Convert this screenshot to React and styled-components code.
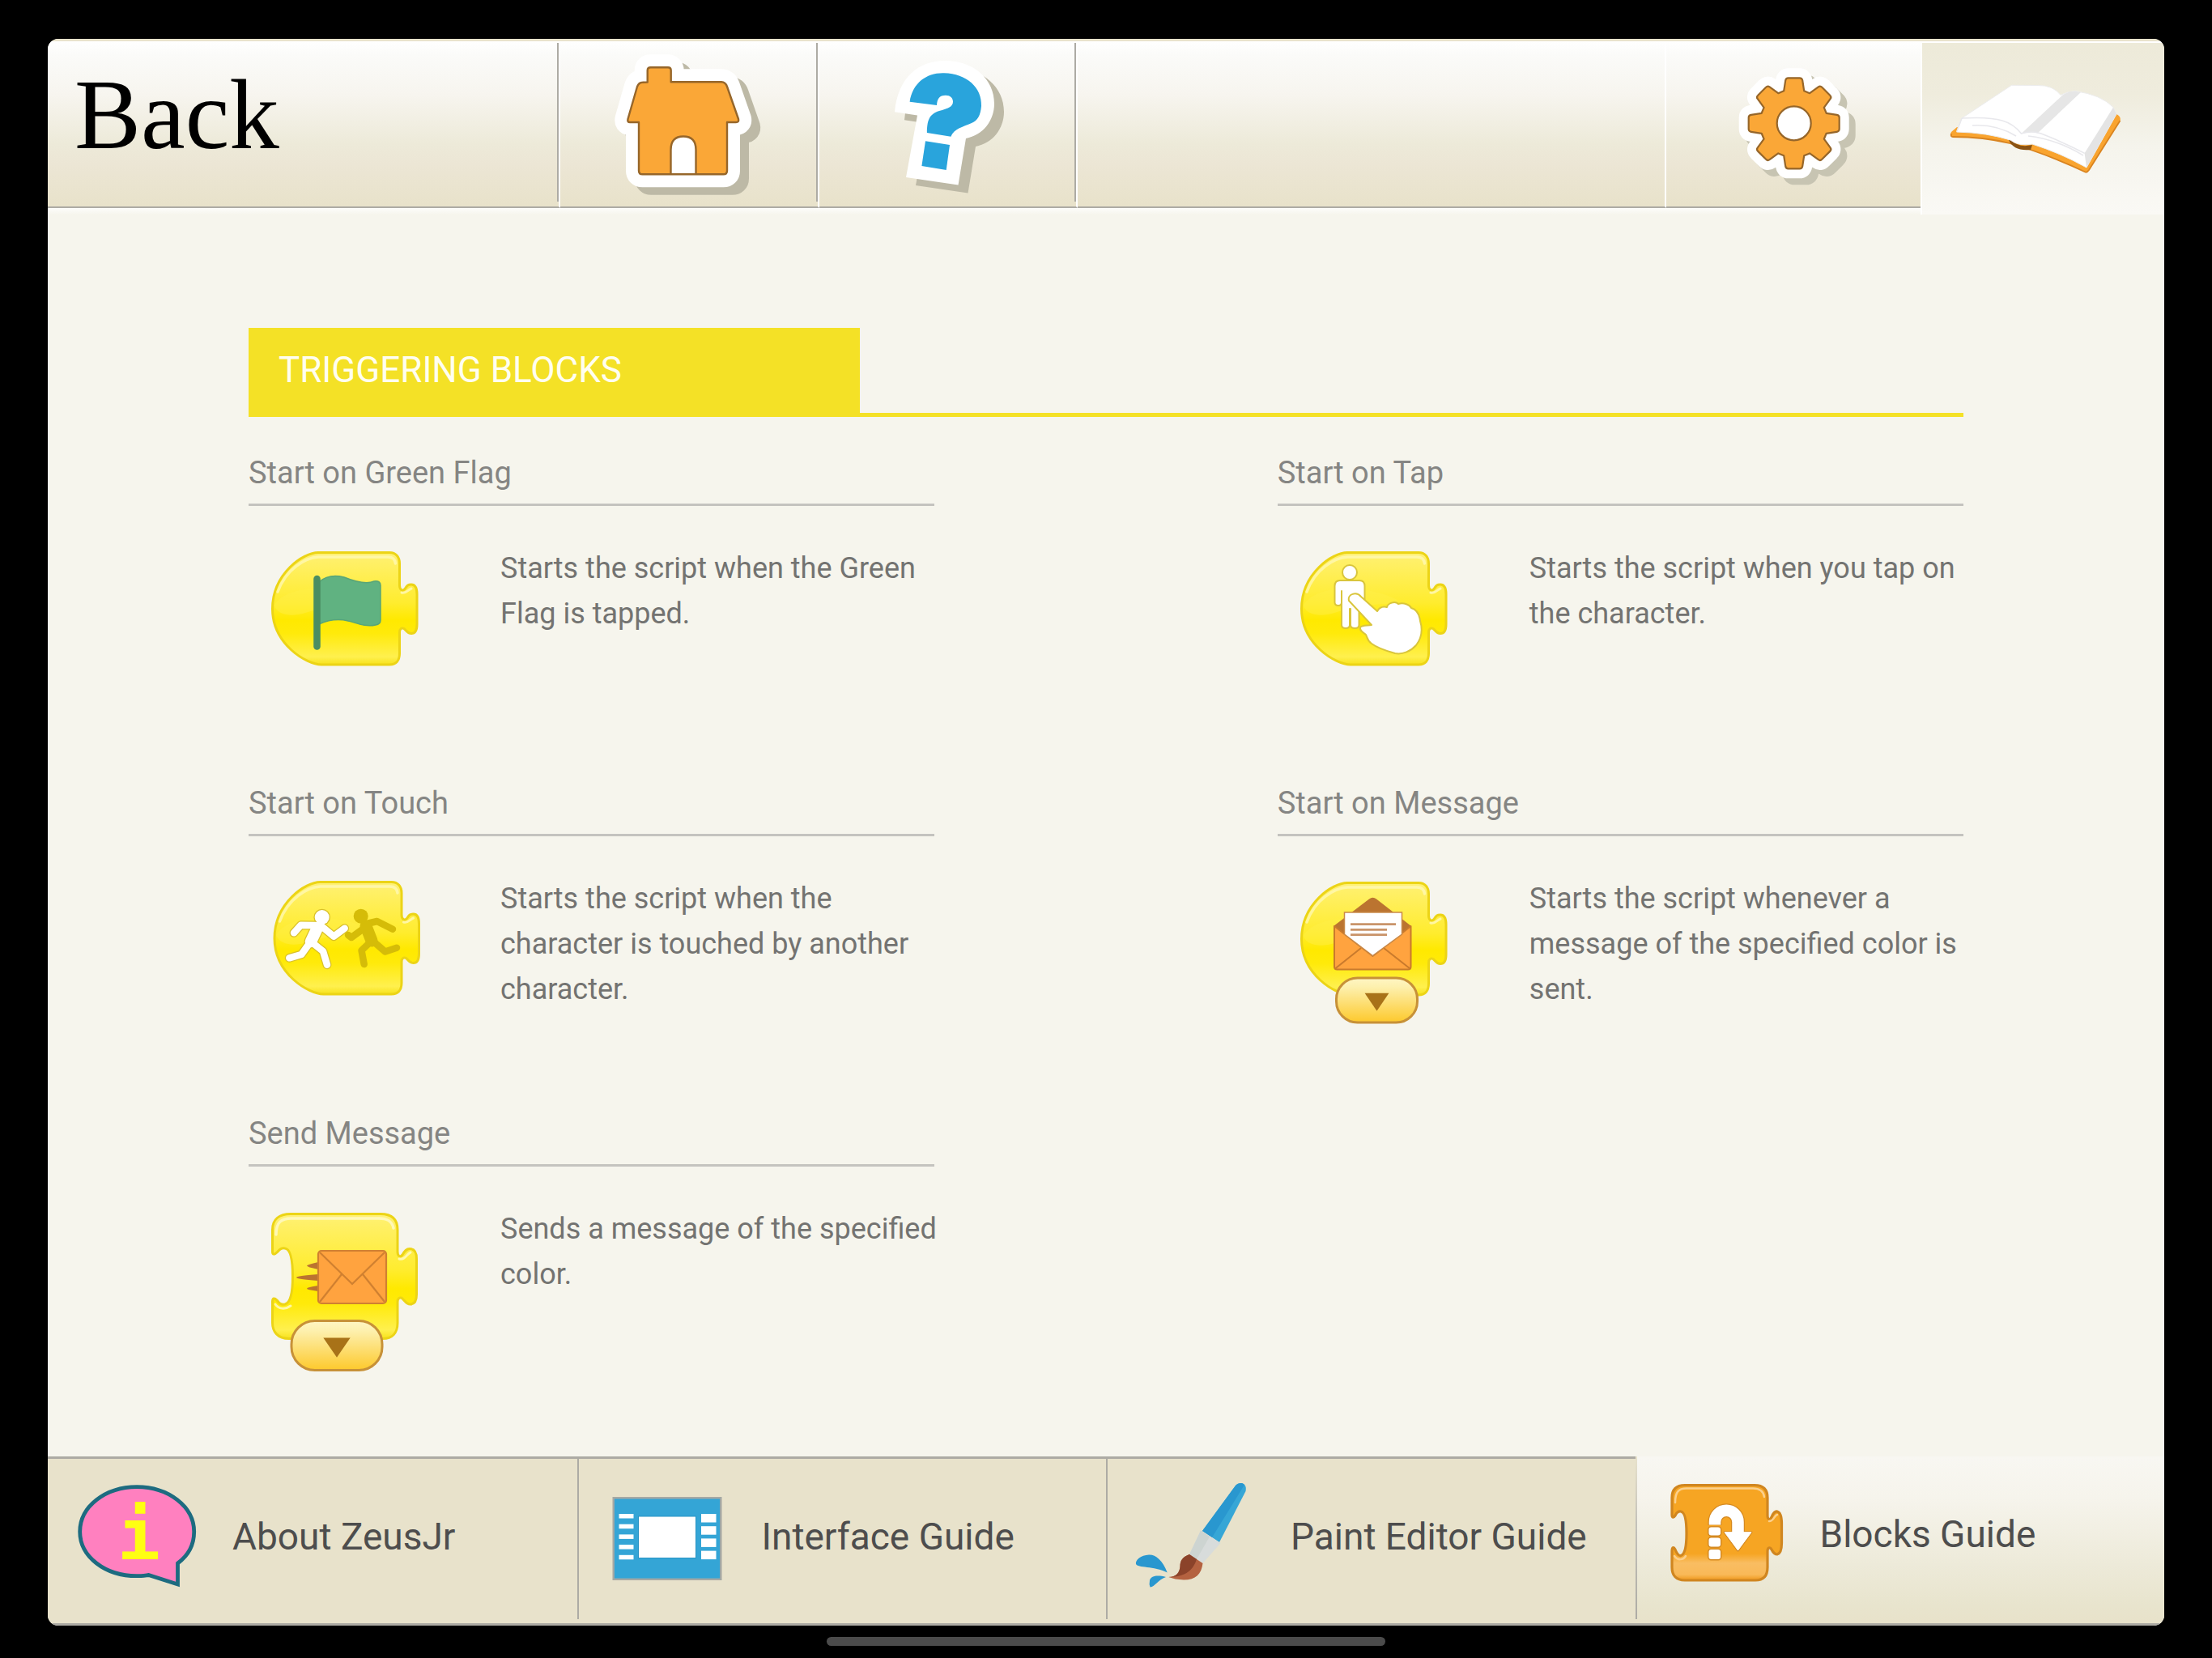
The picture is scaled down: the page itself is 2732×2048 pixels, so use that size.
import React from "react";
import styled, { createGlobalStyle, css } from "styled-components";

const GlobalStyle = createGlobalStyle`
  *, *::before, *::after { box-sizing: border-box; }
  body { margin: 0; background: #000; }
  button { font: inherit; color: inherit; border: 0; padding: 0; margin: 0; background: none; cursor: pointer; }
  svg { display: block; flex: none; overflow: visible; }
`;

const line = "#adaba4";

const Device = styled.div`
  display: flex;
  flex-direction: column;
  min-height: 100vh;
  padding: 48px 59px 0;
  background: #000;
  font-family: Roboto, "Liberation Sans", sans-serif;
`;

const Window = styled.div`
  flex: 1;
  display: flex;
  flex-direction: column;
  overflow: hidden;
  border-radius: 13px;
  background: #f6f5ed;
`;

const Header = styled.header`
  display: grid;
  grid-template-columns: 633px 320px 319px 1fr 314px 301px;
  height: 217px;
  border-top: 3px solid #e8e2cb;
  background: linear-gradient(#fdfdfb, #f6f5ed) bottom / 100% 8px no-repeat;
`;

const raised = "linear-gradient(#ffffff, #fbfbf9 8%, #f7f5ef 32%, #edead9 62%, #ece6d5 74%, #e8e2ca)";

const toolCell = css`
  display: flex;
  height: 206px;
  border-bottom: 2px solid ${line};
  border-right: ${(p) => (p.$edge === "none" ? "0" : "2px solid #fff")};
  background: ${(p) =>
    p.$edge === "line"
      ? `linear-gradient(${line}, ${line}) right 2px / 2px calc(100% - 8px) no-repeat, ${raised}`
      : raised};
`;

const Tool = styled.button`
  ${toolCell}
  align-items: flex-start;
  padding: ${(p) => p.$pad || "0"};
`;

const Spacer = styled.div`
  ${toolCell}
`;

const BackButton = styled(Tool)`
  padding: 21px 33px;
  font-family: "Liberation Serif", "Times New Roman", serif;
  font-size: 123px;
  line-height: 140px;
  color: #000;
`;

const OpenTool = styled.button`
  display: flex;
  align-items: flex-start;
  height: 214px;
  padding: 42px 31px;
  border-top: 2px solid #fff;
  border-left: 2px solid #fff;
  background: linear-gradient(#edead9, #efecdd 30%, #f5f4ec 60%, #faf9f5);
`;

const Main = styled.main`
  flex: 1;
  padding: 140px 248px 0;
`;

const SectionHead = styled.div`
  border-bottom: 5px solid #f4e126;
`;

const SectionTitle = styled.h2`
  width: 755px;
  margin: 0;
  padding: 25px 37px 26px;
  background: #f4e126;
  color: #fffef0;
  font-size: 44px;
  font-weight: 400;
  line-height: 54px;
`;

const Blocks = styled.div`
  display: grid;
  grid-template-columns: 2fr 2fr;
  column-gap: 20%;
  row-gap: 69px;
  padding-top: 36px;
`;

const BlockTitle = styled.h3`
  margin: 0;
  padding: 10px 0 15px;
  border-bottom: 3px solid #c4c3bf;
  color: #858583;
  font-size: 38px;
  font-weight: 400;
  line-height: 46px;
`;

const BlockBody = styled.div`
  display: flex;
  gap: 93px;
  padding: 55px 0 0 28px;
`;

const BlockText = styled.p`
  flex: 1;
  margin: -6px -12px 0 0;
  color: #737371;
  font-size: 36px;
  line-height: 56px;
`;

const Tabs = styled.nav`
  display: grid;
  grid-template-columns: repeat(4, 1fr);
  border-bottom: 3px solid ${line};
`;

const Tab = styled.button`
  display: flex;
  align-items: flex-start;
  gap: 44px;
  height: 206px;
  padding: 30px 0 0 34px;
  color: #4d4d4d;
  font-size: 46px;
  line-height: 54px;
  white-space: nowrap;
  border-top: 3px solid ${line};
  background: linear-gradient(${line}, ${line}) left top / 2px calc(100% - 5px) no-repeat #e8e2cb;

  &:first-child {
    background: #e8e2cb;
  }

  ${(p) =>
    p.$selected &&
    css`
      border-top: 0;
      background: linear-gradient(#e8e2cb, #c4c2bb 40%, ${line}) left top / 2px calc(100% - 5px) no-repeat,
        linear-gradient(#f8f7f2, #f6f4ec 25%, #edead9 65%, #e8e4cd 90%, #e8e2ca);
    `}
`;

const TabLabel = styled.span`
  padding-top: 39px;
`;

const HomeArea = styled.div`
  display: flex;
  justify-content: center;
  height: 40px;
  padding-top: 14px;
`;

const HomeIndicator = styled.div`
  width: 690px;
  height: 11px;
  border-radius: 6px;
  background: #4b4b4b;
`;

/* ---- toolbar drawings ---- */

const HOUSE =
  "M44.7 31.5V17Q44.7 13.3 48.5 13.3H70Q73.7 13.3 73.7 17V31.2H136Q141 31.2 143 37L157 77Q158 81 154 81H143V141Q143 145.3 138.5 145.3H38.5Q34 145.3 34 141V81H23Q19.5 81 20.5 77L32 37Q34 31.7 38.5 31.7Z";

function HouseIcon() {
  return (
    <svg width="190" height="175" viewBox="0 0 190 175" aria-hidden="true">
      <path d={HOUSE} transform="translate(11 9.5)" fill="#bdb9a6" stroke="#bdb9a6" strokeWidth="32" strokeLinejoin="round" />
      <path d={HOUSE} fill="#fff" stroke="#fff" strokeWidth="32" strokeLinejoin="round" />
      <path d={HOUSE} fill="#faa737" stroke="#96662a" strokeWidth="2.4" strokeLinejoin="round" />
      <path d="M73.5 144V115Q73.5 98.5 89 98.5Q104.5 98.5 104.5 115V144" fill="#fff" stroke="#96662a" strokeWidth="2.4" />
    </svg>
  );
}

const HELP_BACK =
  "M5 68.3C9 25 35 5 67 5C103 5 128 28 128 58C128 79 114 97 93 101L83.5 158.5L19 149L33 72.5Z";

function HelpIcon() {
  return (
    <svg width="150" height="175" viewBox="0 0 150 175" aria-hidden="true">
      <path d={HELP_BACK} transform="translate(12 10)" fill="#bdb9a6" />
      <path d={HELP_BACK} fill="#fff" />
      <path
        d="M23.6 55.7C27 32 45 19.5 66 20.2C94 21 113 38 112 61C111 73 107 79 100 82C89 87 78 89 74.4 98.7L44.9 94C45 80 47 71 60 67C71 64 77 62 77 55.5C77 51 73.5 47.7 68 47.7C60 47.7 57.5 52 57 60Z"
        fill="#29a4dc"
      />
      <path d="M43 104.3L73 109L68.7 140L38.4 135Z" fill="#29a4dc" />
    </svg>
  );
}

function gearPath(cx, cy) {
  const point = (r, w, a) => {
    const x = cx + r * Math.cos(a) - w * Math.sin(a);
    const y = cy + r * Math.sin(a) + w * Math.cos(a);
    return `${x.toFixed(1)} ${y.toFixed(1)}`;
  };
  let d = "";
  for (let i = 0; i < 8; i += 1) {
    const a = (i * Math.PI) / 4;
    d += `${i ? "L" : "M"}${point(40, -12.5, a)}L${point(53, -10.5, a)}Q${point(56, -10, a)} ${point(56, -7, a)}`;
    d += `L${point(56, 7, a)}Q${point(56, 10, a)} ${point(53, 10.5, a)}L${point(40, 12.5, a)}`;
  }
  return `${d}Z`;
}

const GEAR = gearPath(75.7, 72.3);

function GearIcon() {
  return (
    <svg width="160" height="160" viewBox="0 0 160 160" aria-hidden="true">
      <path d={GEAR} transform="translate(8 8)" fill="#c7c4b2" stroke="#c7c4b2" strokeWidth="24" strokeLinejoin="round" />
      <path d={GEAR} fill="#fff" stroke="#fff" strokeWidth="24" strokeLinejoin="round" />
      <path d={GEAR} fill="#faa737" stroke="#96662a" strokeWidth="2.2" strokeLinejoin="round" />
      <circle cx="75.7" cy="72.3" r="21" fill="#fff" stroke="#96662a" strokeWidth="2.2" />
    </svg>
  );
}

function BookIcon() {
  return (
    <svg width="220" height="125" viewBox="0 0 220 125" aria-hidden="true">
      <path
        d="M12 62L5 68Q3 72 6 74Q45 74 77 82L103 90Q138 102 170 117.5Q173 118 175 115L213.5 54Q215 49 209 46L170 108L104 82L78 78Z"
        fill="#f9a42f"
      />
      <path d="M5 70Q4 74 7 74Q45 74 77 82L103 90Q138 102 171 117.7Q173 118 175 115L213.5 54" fill="none" stroke="#d98420" strokeWidth="1.8" />
      <path d="M76 78Q82 92 103 90L105 84Q88 88 79 78Z" fill="#8a5314" />
      <path
        d="M79.5 10.3L18 51L11.6 68Q50 69 78 78Q88 86 105 83Q140 94 172 112L209 46L205 37.5Q190 22 158 17.5Q148 18 140 22.5Q131 10 111 10.5Z"
        fill="#fff"
        stroke="#ececec"
        strokeWidth="1"
      />
      <path d="M91.500 70L143 22Q150 17.500 158 17.700L165 19L111.600 69.500Q101 67 91.500 70Z" fill="#e6e6e6" />
      <path d="M169.6 94.3L205 37.7L209 46L172 112Z" fill="#e4e4e4" />
      <path d="M18 51Q52 49 68 54Q82 58 91.5 70Q105 66 116 70Q142 80 169.6 94.3M31 60Q60 58 85 73M100 73Q135 77 168 97M18 51L12 67" fill="none" stroke="#e8e8ec" strokeWidth="1.6" />
    </svg>
  );
}

/* ---- block drawings ---- */

const HAT =
  "M58 1.5H146C154 1.5 158.5 7 158.5 15V42C158.5 47 162 50 165 46.5C168 42 169 41 173 41C178 41 180 45 180 53V90C180 97 178 101.5 173 101.5C168 101.5 167 98 164 95.5C161 94 158.5 96 158.5 100V126C158.5 135 154 140 146 140H62C44 140 1.5 115 1.5 71C1.5 27 40 1.5 58 1.5Z";
const STACK =
  "M24 2.5H135C149 2.5 156 9 156 22V49C156 54 159 57 162 53C165 48 167 45.5 171 45.5C177 45.5 179.5 51 179.5 58V102C179.5 109 177 114 171.5 114C167 114 165 110 162 107C159 104.5 156 107 156 111V137C156 150 149 156.5 138 156.5H22C8 156.5 1.5 148 1.5 137V111C1.5 106 4 106 7 109C10 113 12 115 17 114C24 112 26.5 100 26.5 80C26.5 60 24 46 17 45C12 44 10 47 7 50C4 53 1.5 53 1.5 49V22C1.5 9 10 2.5 24 2.5Z";

function YellowFill({ id }) {
  return (
    <linearGradient id={id} x1="0" y1="0" x2="0" y2="1">
      <stop offset="0" stopColor="#fff27a" />
      <stop offset="0.07" stopColor="#fff069" />
      <stop offset="0.45" stopColor="#ffec2e" />
      <stop offset="0.6" stopColor="#ffe900" />
      <stop offset="0.72" stopColor="#ffea0a" />
      <stop offset="0.93" stopColor="#fff04e" />
      <stop offset="1" stopColor="#f7e21c" />
    </linearGradient>
  );
}

function HatShape({ id, x = 0, y = 0 }) {
  return (
    <g transform={`translate(${x} ${y})`}>
      <defs>
        <YellowFill id={id} />
      </defs>
      <path d={HAT} fill={`url(#${id})`} stroke="#ecd416" strokeWidth="3" />
      <path d="M3.5 67C9 80 26 81 42 76C70 67 98 64 120 65L120 60C80 40 20 40 3.5 67Z" fill="#fff04a" opacity="0.45" />
      <path d="M8 50C18 22 42 8 58 7H144C150 7 153 10 153.5 15" fill="none" stroke="#fff9bd" strokeWidth="3.5" opacity="0.7" strokeLinecap="round" />
      <path d="M161 51C166 53 168 48 173 46" fill="none" stroke="#fff9bd" strokeWidth="3" opacity="0.8" strokeLinecap="round" />
    </g>
  );
}

function Pill({ id, x, y, w, h }) {
  const cx = x + w / 2;
  const t = w * 0.145;
  return (
    <g>
      <defs>
        <linearGradient id={id} x1="0" y1="0" x2="0" y2="1">
          <stop offset="0" stopColor="#fff6c4" />
          <stop offset="0.2" stopColor="#fdf0ae" />
          <stop offset="1" stopColor="#fdc92c" />
        </linearGradient>
      </defs>
      <rect x={x + 1.5} y={y + 1.5} width={w - 3} height={h - 3} rx={h * 0.45} fill={`url(#${id})`} stroke="#c79138" strokeWidth="3" />
      <path d={`M${cx - t} ${y + h * 0.35}H${cx + t}L${cx} ${y + h * 0.73}Z`} fill="#a87218" />
    </g>
  );
}

function BlockSvg({ children }) {
  return (
    <svg width="190" height="210" viewBox="0 0 190 210" aria-hidden="true">
      {children}
    </svg>
  );
}

function FlagBlock() {
  return (
    <BlockSvg>
      <HatShape id="flagFill" y={1} />
      <path d="M59 39C68 31 78 30 90 33C105 39 118 42 127 38Q135 37 135 43V86Q135 91 129 92C115 95 105 89 95 87C82 84 70 86 59 91Z" fill="#60b281" stroke="#58a577" strokeWidth="1.5" />
      <path d="M56.5 35V118.5" stroke="#4a8d62" strokeWidth="8.5" strokeLinecap="round" />
    </BlockSvg>
  );
}

function TapBlock() {
  return (
    <BlockSvg>
      <HatShape id="tapFill" y={1} />
      <g fill="#fff" stroke="#d9c53c" strokeWidth="2" strokeLinejoin="round">
        <circle cx="61" cy="27" r="9" />
        <path d="M49 37H73Q79.5 37 79.5 44V64Q79.5 68 76 68Q73 68 72.5 64V92Q72.5 96 67.5 96Q62 96 62 92V72H61V92Q61 96 56 96Q51 96 51 92V50V64Q51 68 47 68Q42.5 68 42.5 64V44Q42.5 37 49 37Z" />
        <path d="M60 62C58 54 69 50 75 57L95 75C98 69 104 69 107 70C108 65 117 62 121 66C128 64 135 67 137 71C144 73 147 79 148 87C151 97 150 108 143 117C137 124 126 129 117 127C106 124 96 121 88 115C82 111 83 107 81 104C77 101 73 99 74 95C76 92 83 93 88 92Z" />
      </g>
    </BlockSvg>
  );
}

const RUNNER_A =
  "M28 64.3L36.7 54.7L54 55M62 56L77.3 68.7L90.7 58.7M48 76L37.3 91L22.3 95.3M49 75L64 87L69 103.7";

function TouchBlock() {
  return (
    <BlockSvg>
      <HatShape id="touchFill" x={2.5} />
      <g fill="none" stroke="#d5bc08" strokeWidth="8.5" strokeLinecap="round" strokeLinejoin="round">
        <path d="M95 67L99 70L114 59M118 53L130.7 50L150 59.7M122 76L111.5 86L114.7 103M124 73L140.7 87.5L155 82.7" />
        <path d="M117 56L124 74" strokeWidth="15" />
        <circle cx="110.7" cy="43.7" r="9" fill="#d5bc08" stroke="none" />
      </g>
      <g fill="none" stroke="#d9c02a" strokeLinecap="round" strokeLinejoin="round">
        <path d={RUNNER_A} strokeWidth="11" />
        <path d="M57 58L49 75" strokeWidth="17" />
        <circle cx="62.7" cy="45" r="10.3" fill="#d9c02a" stroke="none" />
      </g>
      <g fill="none" stroke="#fff" strokeLinecap="round" strokeLinejoin="round">
        <path d={RUNNER_A} strokeWidth="8.5" />
        <path d="M57 58L49 75" strokeWidth="14.5" />
        <circle cx="62.7" cy="45" r="9" fill="#fff" stroke="none" />
      </g>
    </BlockSvg>
  );
}

function MessageBlock() {
  return (
    <BlockSvg>
      <HatShape id="messageFill" y={1} />
      <path d="M41 56L85 22.5Q89.4 19 94 22.5L137 56L126 68H54Z" fill="#bb7430" />
      <path d="M42 56L89.4 93L136.5 56V106Q136.5 109.5 133 109.5H45.5Q42 109.5 42 106Z" fill="#ffa33f" stroke="#c97a2c" strokeWidth="2" strokeLinejoin="round" />
      <path d="M43 108.5L75 83M135.5 108.5L103 83" stroke="#c97a2c" strokeWidth="2" />
      <path d="M54.5 39H125.5V66L89.4 92.500L54.5 66Z" fill="#fff" stroke="#c98a4a" strokeWidth="1.5" />
      <path d="M62 53.7H118M62 60.3H107M62 66.7H107" stroke="#c9946a" strokeWidth="2.8" />
      <Pill id="messagePill" x={43} y={118.5} w={103} h={58} />
    </BlockSvg>
  );
}

function SendBlock() {
  return (
    <BlockSvg>
      <defs>
        <YellowFill id="sendFill" />
      </defs>
      <g transform="translate(0 1)">
        <path d={STACK} fill="url(#sendFill)" stroke="#ecd416" strokeWidth="3" strokeLinejoin="round" />
        <path d="M6 28C6 13 12 8 25 8H133C143 8 149 11 151 20" fill="none" stroke="#fffacb" strokeWidth="3.5" opacity="0.8" strokeLinecap="round" />
        <path d="M158 58C165 60 167 52 172 50M5 114C9 120 17 121 24 116" fill="none" stroke="#fffacb" strokeWidth="3" opacity="0.8" strokeLinecap="round" />
      </g>
      <path d="M58 63Q44 66 44 67.5Q44 69 58 72ZM58 78Q31 80 31 82Q31 84 58 86ZM58 92Q44 94 44 95.7Q44 97 58 99Z" fill="#bb7430" />
      <rect x="58" y="49" width="84" height="65" rx="4" fill="#ffa33f" stroke="#d08030" strokeWidth="2.2" />
      <path d="M60 51L100 90L140 51M60 112L87 78M140 112L113 78" fill="none" stroke="#d08030" strokeWidth="2.2" />
      <Pill id="sendPill" x={23.5} y={134} w={115} h={64} />
    </BlockSvg>
  );
}

/* ---- tab drawings ---- */

function TabSvg({ children }) {
  return (
    <svg width="150" height="130" viewBox="0 0 150 130" aria-hidden="true">
      {children}
    </svg>
  );
}

const InfoLetter = styled.text`
  font-family: "DejaVu Sans Mono", monospace;
  font-weight: 700;
  font-size: 88px;
  fill: #ffff12;
`;

function AboutIcon() {
  return (
    <TabSvg>
      <g transform="translate(2 0)">
        <path
          d="M124.5 99C138 89 144.7 75 144.7 60C144.7 29 113 4.7 74 4.7C35 4.7 3.7 29 3.7 60C3.7 91 35 114.7 74 114.7C79 114.7 84 114 88.5 113.5L124.5 125Z"
          fill="#ff80bf"
          stroke="#1d6b80"
          strokeWidth="4.8"
        />
        <InfoLetter x="76.5" y="94" textAnchor="middle">i</InfoLetter>
      </g>
    </TabSvg>
  );
}

function InterfaceIcon() {
  return (
    <TabSvg>
      <g transform="translate(9.5 17)">
        <rect x="1.2" y="1.2" width="132.6" height="100.6" fill="#34a5d6" stroke="#a5a8a4" strokeWidth="2.4" />
        <rect x="32" y="24" width="71" height="51.5" fill="#fff" stroke="#2793c4" strokeWidth="1" />
        {[0, 1, 2, 3, 4].map((i) => (
          <rect key={`l${i}`} x="8" y={21 + i * 12.7} width="18" height="5.5" fill="#fff" />
        ))}
        {[0, 1, 2, 3].map((i) => (
          <rect key={`r${i}`} x="109.5" y={21 + i * 15.2} width="18.5" height="10.5" fill="#fff" />
        ))}
      </g>
    </TabSvg>
  );
}

function BrushIcon() {
  return (
    <TabSvg>
      <g transform="translate(0 -2)">
        <path d="M85 61L126 5Q129 1.5 134 2Q140 4 138.5 12L106 75Z" fill="#36a6d6" />
        <path d="M85 61L126 5Q129 1.5 134 2L137 4L97 69Z" fill="#2997cf" />
        <path d="M83 60.5L107.5 76L85.5 101L69 90Z" fill="#d8dcdb" />
        <path d="M83 60.5L94 68L78 96L69 90Z" fill="#cdd4d1" />
        <path d="M69 90L85.5 101C84 114 77 121.5 62 121.5Q51 121 43.3 118C53 118 57 112 57.5 105C57.5 97 61 93 69 90Z" fill="#b46240" />
        <path d="M69 90L78 96C74 108 66 118 43.3 118C53 118 57 112 57.5 105C57.5 97 61 93 69 90Z" fill="#8b432a" />
        <path d="M41.7 112.5C36 97 27 90 19 90.5C9 91 2 97 3 102C5 107 25 104 41.7 112.5ZM40 118C30 115.5 22 116 20 122Q19 127 20.5 130.5C27 130 30 121 40 118Z" fill="#2997cf" />
      </g>
    </TabSvg>
  );
}

const LOOP =
  "M18 2.5H104C115 2.5 120 8 120 18V40C120 45 123 46 125 42C127 37 129 34.5 132 35C136 36 137.5 42 137.5 50V74C137.5 82 136 87 132 88C129 88 127 86 125 82C123 78 120 80 120 84V104C120 115 115 120 105 120H18C7 120 2 114 2 104V84C2 79 4 78 6 82C8 87 10 90 13 89.5C18 88 20 77 20 62C20 47 18 36 13 35C10 34.5 8 36 6 40C4 43 2 43 2 39V18C2 8 7 2.5 18 2.5Z";

function LoopBlockIcon() {
  return (
    <TabSvg>
      <defs>
        <linearGradient id="loopFill" x1="0" y1="0" x2="0" y2="1">
          <stop offset="0" stopColor="#f6a523" />
          <stop offset="0.72" stopColor="#f6a523" />
          <stop offset="0.82" stopColor="#f9bd62" />
          <stop offset="0.94" stopColor="#f9b958" />
          <stop offset="1" stopColor="#ef971c" />
        </linearGradient>
      </defs>
      <g transform="translate(9 3)">
        <path d={LOOP} fill="url(#loopFill)" stroke="#d08620" strokeWidth="3.2" strokeLinejoin="round" />
        <path d="M6 24C6 11 10 6.5 20 6.5H102C111 6.5 115 10 116 17M122 47C128 47 128 40 132 39M5 90C9 96 16 95 19 90" fill="none" stroke="#fcd08c" strokeWidth="2.5" strokeLinecap="round" />
        <g stroke="#d58a22" strokeWidth="3" fill="none">
          <path d="M55 52V48A14.25 14.25 0 0 1 83.5 48V62" strokeWidth="17" />
          <path d="M67 60.7H100L83.5 83Z" strokeLinejoin="round" />
          <rect x="47.5" y="54.5" width="14.5" height="10" rx="3" />
          <rect x="47.5" y="67.5" width="14.5" height="11" rx="3" />
          <rect x="47.5" y="82" width="14.5" height="12" rx="3" />
        </g>
        <path d="M55 51.5V48A14.25 14.25 0 0 1 83.5 48V63" stroke="#fff" strokeWidth="14.5" fill="none" />
        <path d="M67 60.7H100L83.5 83Z" fill="#fff" stroke="#fff" strokeLinejoin="round" />
        <rect x="47.5" y="54.5" width="14.5" height="10" rx="3" fill="#fff" />
        <rect x="47.5" y="67.5" width="14.5" height="11" rx="3" fill="#fff" />
        <rect x="47.5" y="82" width="14.5" height="12" rx="3" fill="#fff" />
      </g>
    </TabSvg>
  );
}

const blocks = [
  { title: "Start on Green Flag", Icon: FlagBlock, text: "Starts the script when the Green Flag is tapped." },
  { title: "Start on Tap", Icon: TapBlock, text: "Starts the script when you tap on the character." },
  { title: "Start on Touch", Icon: TouchBlock, text: "Starts the script when the character is touched by another character." },
  { title: "Start on Message", Icon: MessageBlock, text: "Starts the script whenever a message of the specified color is sent." },
  { title: "Send Message", Icon: SendBlock, text: "Sends a message of the specified color." },
];

const tabs = [
  { label: "About ZeusJr", Icon: AboutIcon },
  { label: "Interface Guide", Icon: InterfaceIcon },
  { label: "Paint Editor Guide", Icon: BrushIcon },
  { label: "Blocks Guide", Icon: LoopBlockIcon, selected: true },
];

export default function App() {
  return (
    <Device>
      <GlobalStyle />
      <Window>
        <Header>
          <BackButton $edge="line">Back</BackButton>
          <Tool $edge="line" $pad="19px 63px" aria-label="Home">
            <HouseIcon />
          </Tool>
          <Tool $edge="line" $pad="19px 88px" aria-label="Help">
            <HelpIcon />
          </Tool>
          <Spacer />
          <Tool $edge="none" $pad="29px 82px" aria-label="Settings">
            <GearIcon />
          </Tool>
          <OpenTool aria-label="Guides" aria-pressed="true">
            <BookIcon />
          </OpenTool>
        </Header>
        <Main>
          <SectionHead>
            <SectionTitle>TRIGGERING BLOCKS</SectionTitle>
          </SectionHead>
          <Blocks>
            {blocks.map(({ title, Icon, text }) => (
              <article key={title}>
                <BlockTitle>{title}</BlockTitle>
                <BlockBody>
                  <Icon />
                  <BlockText>{text}</BlockText>
                </BlockBody>
              </article>
            ))}
          </Blocks>
        </Main>
        <Tabs>
          {tabs.map(({ label, Icon, selected }) => (
            <Tab key={label} $selected={selected} aria-current={selected ? "page" : undefined}>
              <Icon />
              <TabLabel>{label}</TabLabel>
            </Tab>
          ))}
        </Tabs>
      </Window>
      <HomeArea>
        <HomeIndicator />
      </HomeArea>
    </Device>
  );
}
